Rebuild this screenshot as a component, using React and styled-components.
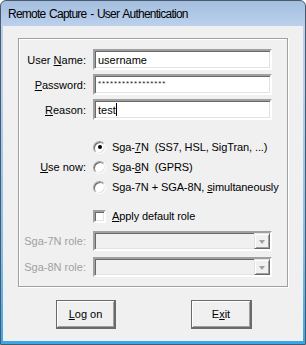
import styled, { createGlobalStyle } from "styled-components";

const GlobalStyle = createGlobalStyle`
  html, body {
    margin: 0;
    padding: 0;
    background: #ffffff;
  }
  body {
    font-family: "Liberation Sans", Arial, sans-serif;
    font-size: 11px;
    color: #000;
  }
`;

const App = () => (
  <>
    <GlobalStyle />
    <Window>
      <TitleBar>Remote Capture - User Authentication</TitleBar>
      <Client>
        <GroupBox>
          <FormGrid>
            <Label>User <u>N</u>ame:</Label>
            <TextBox>username</TextBox>

            <Label $mt={4}><u>P</u>assword:</Label>
            <TextBox $mt={4}>
              <Stars>*****************</Stars>
            </TextBox>

            <Label $mt={4}><u>R</u>eason:</Label>
            <TextBox $mt={4}>
              test<Caret />
            </TextBox>

            <Label $mt={17}><u>U</u>se now:</Label>
            <OptionList $mt={17}>
              <Option>
                <Radio $checked />
                <OptionText>Sga-<u>7</u>N  (SS7, HSL, SigTran, ...)</OptionText>
              </Option>
              <Option>
                <Radio />
                <OptionText>Sga-<u>8</u>N  (GPRS)</OptionText>
              </Option>
              <Option>
                <Radio />
                <OptionText>Sga-7N + SGA-8N, <u>s</u>imultaneously</OptionText>
              </Option>
            </OptionList>

            <span />
            <Option $mt={9}>
              <CheckBox />
              <OptionText><u>A</u>pply default role</OptionText>
            </Option>

            <Label $mt={5} $disabled>Sga-7N role:</Label>
            <Combo $mt={5}>
              <DropButton>
                <Arrow />
              </DropButton>
            </Combo>

            <Label $mt={6} $disabled>Sga-8N role:</Label>
            <Combo $mt={6}>
              <DropButton>
                <Arrow />
              </DropButton>
            </Combo>
          </FormGrid>
        </GroupBox>
        <ButtonRow>
          <PushButton $w={60}><u>L</u>og on</PushButton>
          <PushButton $w={61}>E<u>x</u>it</PushButton>
        </ButtonRow>
      </Client>
    </Window>
  </>
);

const Window = styled.div`
  width: 306px;
  height: 345px;
  box-sizing: border-box;
  border: 1px solid #4a5a6c;
  border-radius: 6px 6px 0 0;
  padding: 0 2px 3px 2px;
  display: flex;
  flex-direction: column;
  background: linear-gradient(
    #a4bedf 0px,
    #bad0ec 24px,
    #b4d0ee 90px,
    #7fbdea 250px,
    #3aa6e6 100%
  );
  overflow: hidden;
`;

const TitleBar = styled.div`
  height: 25px;
  flex: none;
  display: flex;
  align-items: center;
  padding-left: 5px;
  padding-top: 1px;
  box-sizing: border-box;
  font-family: "Liberation Sans", Arial, sans-serif;
  font-size: 12px;
  letter-spacing: -0.75px;
  word-spacing: 1px;
  color: #000;
  white-space: nowrap;
`;

const Client = styled.div`
  flex: 1;
  background: #f0f0f0;
  padding: 12px 15px 0 15px;
  display: flex;
  flex-direction: column;
`;

const GroupBox = styled.div`
  height: 249px;
  box-sizing: border-box;
  border: 1px solid #a0a0a0;
  box-shadow: 1px 1px 0 #fff, inset 1px 1px 0 #fff;
  padding: 10px 14px 0 0;
`;

const FormGrid = styled.div`
  display: grid;
  grid-template-columns: 67px 179px;
  column-gap: 7px;
  align-items: center;
`;

const Label = styled.div`
  margin-top: ${(p) => p.$mt || 0}px;
  text-align: right;
  white-space: nowrap;
  color: ${(p) => (p.$disabled ? "#a0a0a0" : "#000")};
`;

const sunken = `
  box-sizing: border-box;
  border: 2px solid;
  border-color: #a0a0a0 #ffffff #ffffff #a0a0a0;
  box-shadow: inset 1px 1px 0 #696969, inset -1px -1px 0 #e3e3e3;
`;

const TextBox = styled.div`
  ${sunken}
  margin-top: ${(p) => p.$mt || 0}px;
  height: 21px;
  background: #fff;
  padding: 0 3px;
  display: flex;
  align-items: center;
  white-space: nowrap;
`;

const Stars = styled.span`
  font-size: 8px;
  letter-spacing: 0.9px;
  margin-top: -2px;
  color: #222;
`;

const Caret = styled.span`
  display: inline-block;
  width: 1px;
  height: 13px;
  background: #000;
`;

const OptionList = styled.div`
  margin-top: ${(p) => p.$mt || 0}px;
  display: flex;
  flex-direction: column;
`;

const Option = styled.div`
  margin-top: ${(p) => p.$mt || 0}px;
  height: 20px;
  display: flex;
  align-items: center;
`;

const OptionText = styled.span`
  margin-left: 6px;
  white-space: pre;
  letter-spacing: -0.1px;
`;

const Radio = styled.span`
  position: relative;
  width: 13px;
  height: 13px;
  box-sizing: border-box;
  border-radius: 50%;
  border: 1px solid;
  border-color: #a0a0a0 #ffffff #ffffff #a0a0a0;
  box-shadow: inset 1px 1px 0 #696969, inset -1px -1px 0 #e3e3e3;
  background: #fff;
  flex: none;

  &::after {
    content: "";
    display: ${(p) => (p.$checked ? "block" : "none")};
    position: absolute;
    left: 3.5px;
    top: 3.5px;
    width: 4px;
    height: 4px;
    border-radius: 50%;
    background: #000;
  }
`;

const CheckBox = styled.span`
  ${sunken}
  width: 13px;
  height: 13px;
  background: #fff;
  flex: none;
`;

const Combo = styled.div`
  ${sunken}
  margin-top: ${(p) => p.$mt || 0}px;
  height: 20px;
  background: #f0f0f0;
  display: flex;
  justify-content: flex-end;
`;

const DropButton = styled.div`
  width: 16px;
  height: 100%;
  box-sizing: border-box;
  background: #f0f0f0;
  border-top: 1px solid #e3e3e3;
  border-left: 1px solid #e3e3e3;
  border-right: 1px solid #696969;
  border-bottom: 1px solid #696969;
  box-shadow: inset 1px 1px 0 #fff, inset -1px -1px 0 #a0a0a0;
  display: flex;
  align-items: center;
  justify-content: center;
`;

const Arrow = styled.span`
  width: 0;
  height: 0;
  border-left: 3.5px solid transparent;
  border-right: 3.5px solid transparent;
  border-top: 4px solid #a0a0a0;
  margin-top: 1px;
`;

const ButtonRow = styled.div`
  display: flex;
  justify-content: space-between;
  padding: 0 36px 0 38px;
  margin-top: 13px;
`;

const PushButton = styled.div`
  width: ${(p) => p.$w}px;
  height: 29px;
  box-sizing: border-box;
  border: 1px solid #6a6a6a;
  border-right-width: 2px;
  border-bottom-width: 2px;
  box-shadow: inset 1px 1px 0 #fff, inset -1px -1px 0 #a0a0a0;
  background: #f0f0f0;
  display: flex;
  align-items: center;
  justify-content: center;
  font-size: 11px;
`;

export default App;
